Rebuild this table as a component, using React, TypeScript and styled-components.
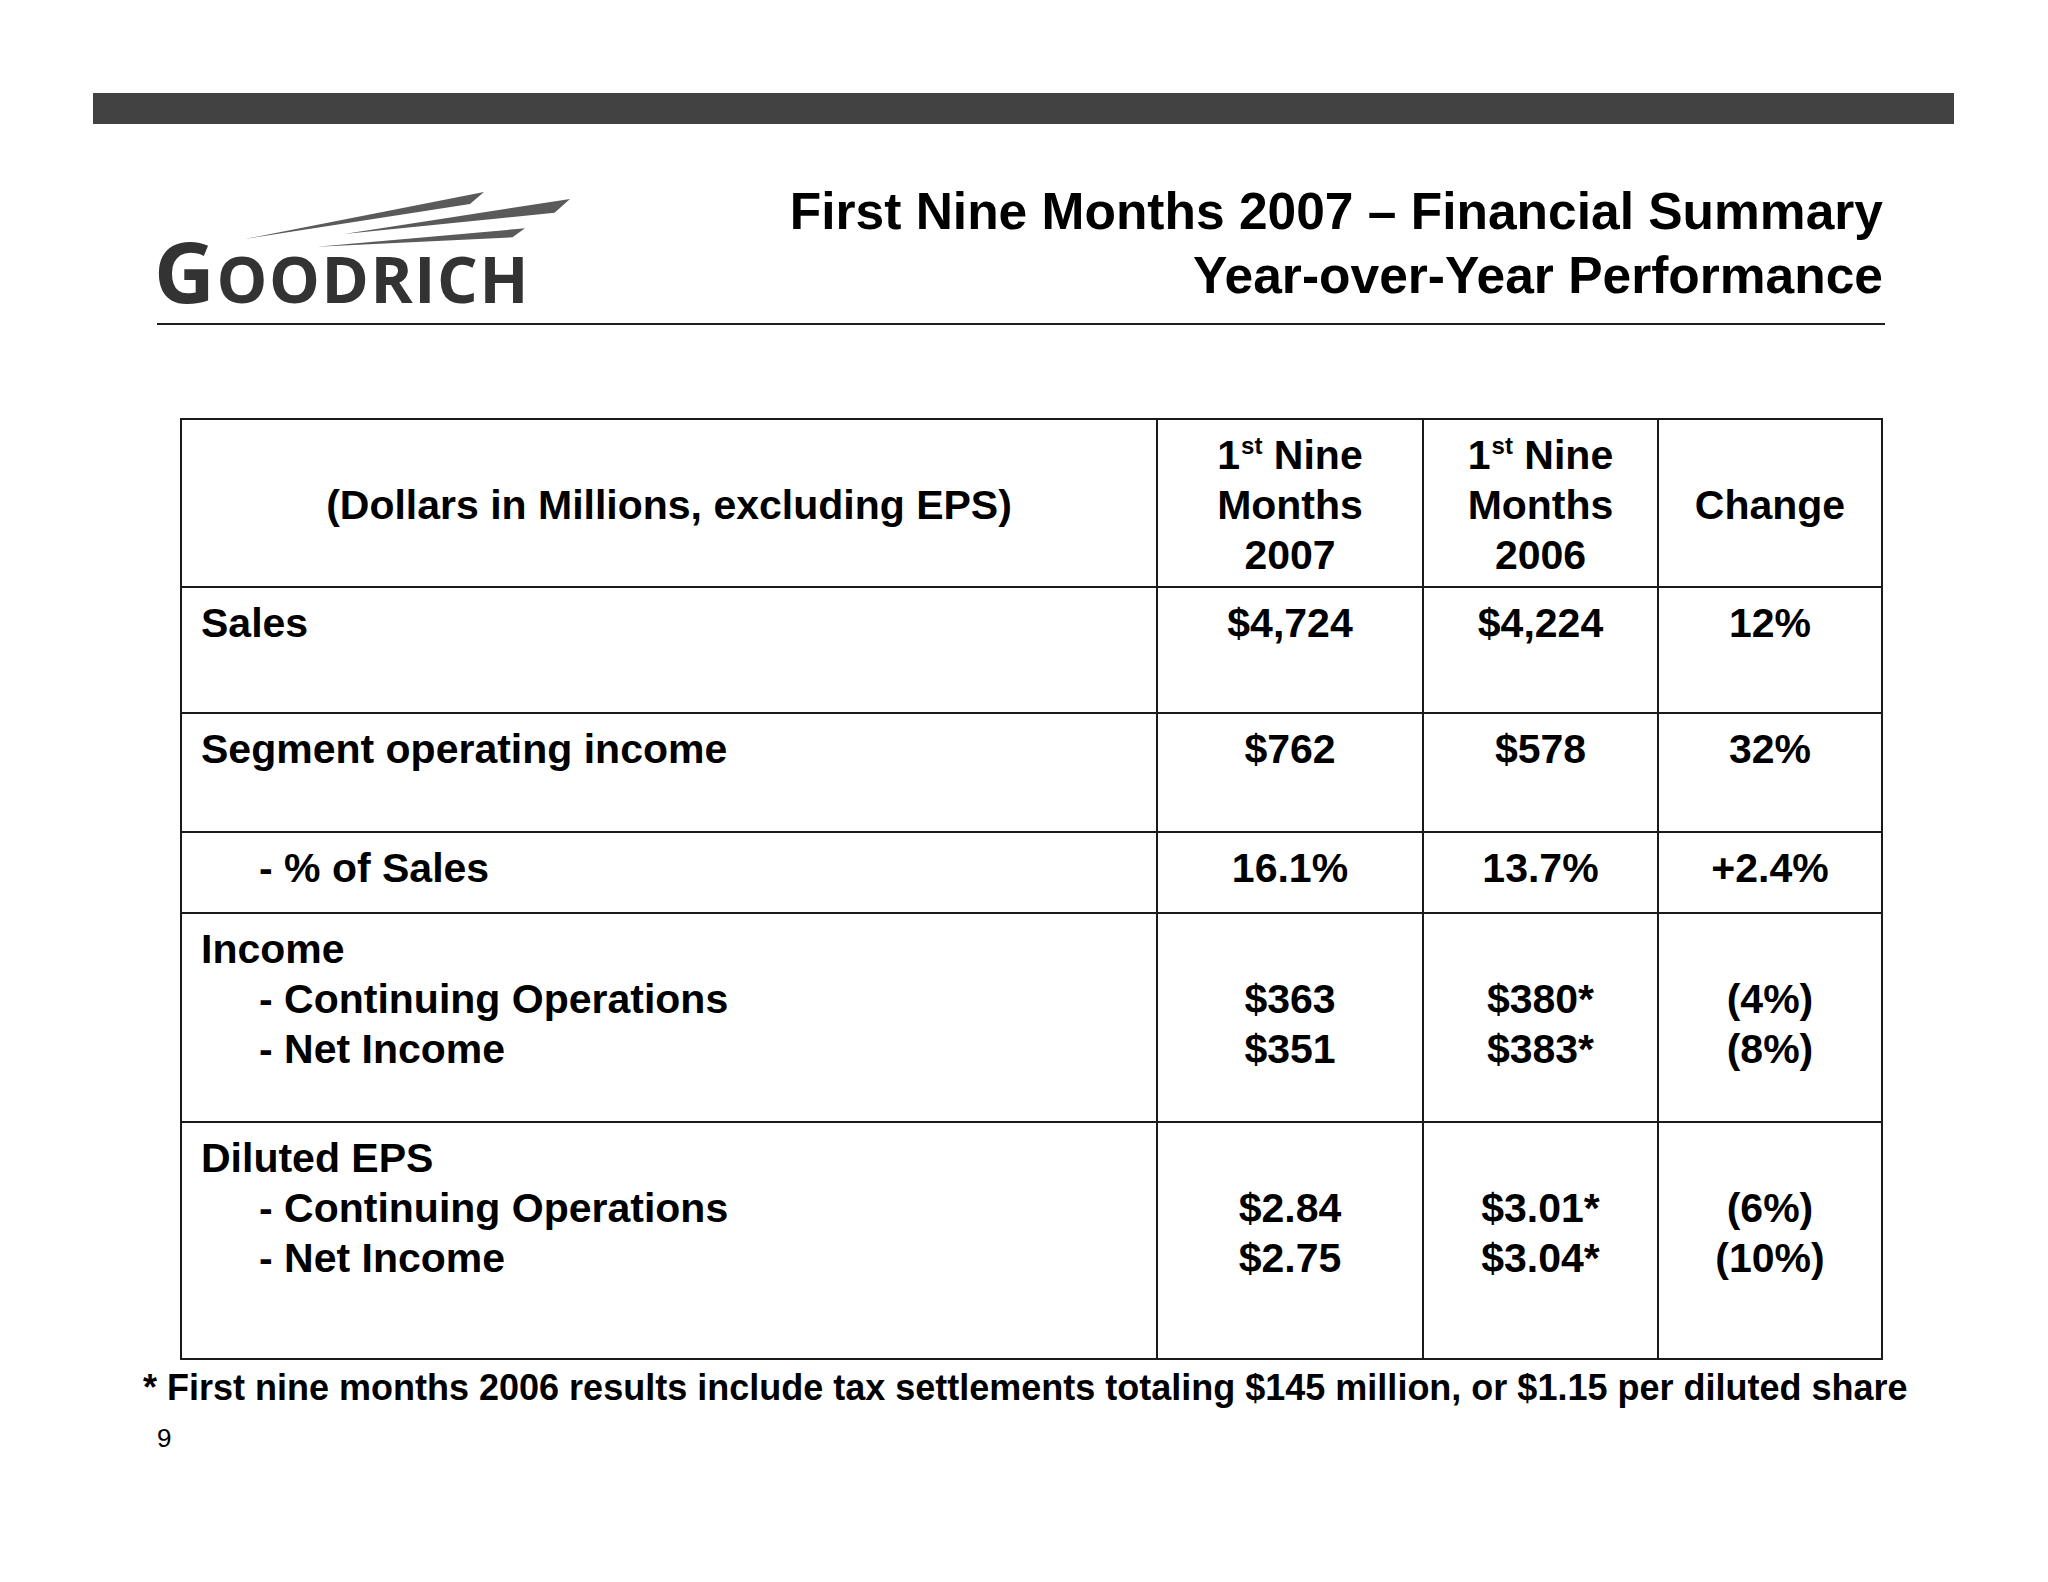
import React from 'react';
import styled, { createGlobalStyle } from 'styled-components';

const GlobalStyle = createGlobalStyle`
    html, body {
        margin: 0;
        padding: 0;
        background: #fff;
    }
    body {
        font-family: "Liberation Sans", Arial, sans-serif;
        color: #000;
    }
`;

const Slide = styled.div`
    width: 2048px;
    height: 1582px;
    box-sizing: border-box;
    padding-top: 93px;
    background: #fff;
    overflow: hidden;
`;

const TopBar = styled.div`
    height: 31px;
    margin: 0 94px 0 93px;
    background: #424242;
`;

const Header = styled.header`
    display: flex;
    justify-content: space-between;
    align-items: flex-end;
    height: 201px;
    box-sizing: border-box;
    margin: 0 163px 0 157px;
    border-bottom: 2px solid #1e1e1e;
`;

const Logo = styled.div`
    display: flex;
    flex-direction: column;
    margin-bottom: 10px;
`;

const Streaks = styled.svg`
    display: block;
    overflow: visible;
`;

const Wordmark = styled.div`
    margin-left: -3px;
    font-family: "Open Sans", "Liberation Sans", sans-serif;
    font-weight: 700;
    font-size: 84px;
    line-height: 1;
    color: #333;
    letter-spacing: 1.6px;
    white-space: nowrap;
`;

const SmallCaps = styled.span`
    font-size: 64px;
`;

const Title = styled.h1`
    margin: 0 2px 16px 0;
    font-size: 51.5px;
    line-height: 64px;
    font-weight: 700;
    text-align: right;
    color: #000;
`;

const TitleLine = styled.span`
    display: block;
    white-space: nowrap;
`;

const Table = styled.div`
    margin: 93px 0 0 180px;
    width: 1703px;
    box-sizing: border-box;
    border-top: 2px solid #1a1a1a;
    border-left: 2px solid #1a1a1a;
`;

const Row = styled.div<{ $h: number }>`
    display: grid;
    grid-template-columns: 976px 266px 235px 224px;
    height: ${p => p.$h}px;
`;

const Cell = styled.div<{ $label?: boolean }>`
    box-sizing: border-box;
    border-right: 2px solid #1a1a1a;
    border-bottom: 2px solid #1a1a1a;
    padding: ${p => (p.$label ? '10px 0 0 19px' : '10px 0 0 0')};
    text-align: ${p => (p.$label ? 'left' : 'center')};
    font-size: 41px;
    line-height: 50px;
    font-weight: 700;
    white-space: nowrap;
`;

const HeadCell = styled(Cell)`
    display: flex;
    flex-direction: column;
    align-items: center;
    justify-content: center;
    padding: 4px 0 0 0;
    text-align: center;
`;

const Line = styled.div<{ $indent?: boolean }>`
    padding-left: ${p => (p.$indent ? '58px' : '0')};
    height: 50px;
`;

const Sup = styled.sup`
    font-size: 24px;
    line-height: 0;
    vertical-align: 15px;
    margin-left: 1px;
`;

const Footnote = styled.p`
    margin: 7px 0 0 143px;
    font-size: 36px;
    line-height: 41px;
    font-weight: 700;
    white-space: nowrap;
`;

const PageNum = styled.div`
    margin: 15px 0 0 157px;
    font-size: 26px;
    line-height: 30px;
`;

type LabelLine = { text: string; indent?: boolean };

interface DataRow {
    h: number;
    label: LabelLine[];
    values: string[][];
}

const rows: DataRow[] = [
    { h: 126, label: [{ text: 'Sales' }], values: [['$4,724'], ['$4,224'], ['12%']] },
    { h: 119, label: [{ text: 'Segment operating income' }], values: [['$762'], ['$578'], ['32%']] },
    { h: 81, label: [{ text: '- % of Sales', indent: true }], values: [['16.1%'], ['13.7%'], ['+2.4%']] },
    {
        h: 209,
        label: [
            { text: 'Income' },
            { text: '- Continuing Operations', indent: true },
            { text: '- Net Income', indent: true },
        ],
        values: [['', '$363', '$351'], ['', '$380*', '$383*'], ['', '(4%)', '(8%)']],
    },
    {
        h: 237,
        label: [
            { text: 'Diluted EPS' },
            { text: '- Continuing Operations', indent: true },
            { text: '- Net Income', indent: true },
        ],
        values: [['', '$2.84', '$2.75'], ['', '$3.01*', '$3.04*'], ['', '(6%)', '(10%)']],
    },
];

const LogoMark: React.FC = () => (
    <Logo>
        <Streaks width={420} height={41} viewBox="0 0 420 41">
            <polygon points="88,51 327,4 313,16" fill="#5a5a5a" />
            <polygon points="187,46 413,11 397.5,24.7" fill="#5a5a5a" />
            <polygon points="160,58.7 368,40.3 355.5,49.3" fill="#5a5a5a" />
        </Streaks>
        <Wordmark>
            G<SmallCaps>OODRICH</SmallCaps>
        </Wordmark>
    </Logo>
);

const NineMonths: React.FC<{ year: string }> = ({ year }) => (
    <>
        <div>
            1<Sup>st</Sup> Nine
        </div>
        <div>Months</div>
        <div>{year}</div>
    </>
);

const App: React.FC = () => {
    return (
        <Slide>
            <GlobalStyle />
            <TopBar />
            <Header>
                <LogoMark />
                <Title>
                    <TitleLine>First Nine Months 2007 – Financial Summary</TitleLine>
                    <TitleLine>Year-over-Year Performance</TitleLine>
                </Title>
            </Header>

            <Table>
                <Row $h={168}>
                    <HeadCell>(Dollars in Millions, excluding EPS)</HeadCell>
                    <HeadCell>
                        <NineMonths year="2007" />
                    </HeadCell>
                    <HeadCell>
                        <NineMonths year="2006" />
                    </HeadCell>
                    <HeadCell>Change</HeadCell>
                </Row>
                {rows.map((row, i) => (
                    <Row key={i} $h={row.h}>
                        <Cell $label>
                            {row.label.map((l, j) => (
                                <Line key={j} $indent={l.indent}>
                                    {l.text}
                                </Line>
                            ))}
                        </Cell>
                        {row.values.map((col, k) => (
                            <Cell key={k}>
                                {col.map((v, j) => (
                                    <Line key={j}>{v || '\u00a0'}</Line>
                                ))}
                            </Cell>
                        ))}
                    </Row>
                ))}
            </Table>

            <Footnote>
                * First nine months 2006 results include tax settlements totaling $145 million, or $1.15 per diluted share
            </Footnote>
            <PageNum>9</PageNum>
        </Slide>
    );
};

export default App;
